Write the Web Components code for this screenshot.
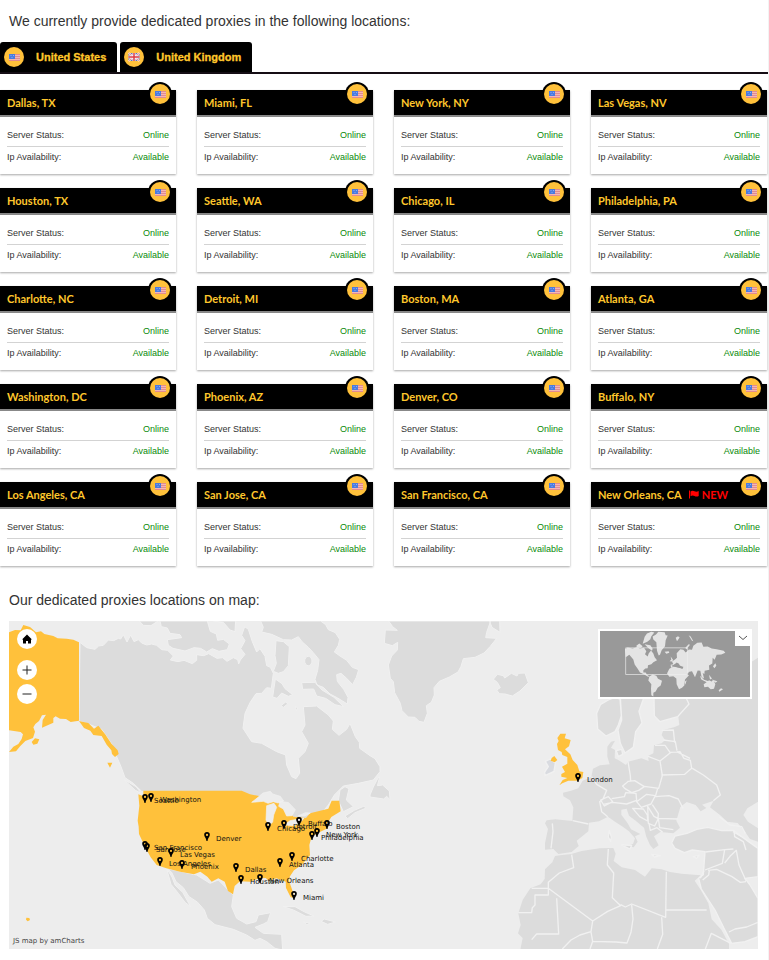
<!DOCTYPE html>
<html lang="en">
<head>
<meta charset="utf-8">
<title>Dedicated proxy locations</title>
<style>
body { margin: 0; background: #fff; color: #333; font-family: "Liberation Sans", Arial, sans-serif; }
</style>
</head>
<body>
<proxy-page></proxy-page>

<template id="flag-badge">
<style>
:host { display: block; width: 20px; height: 20px; border-radius: 50%; background: #ffc13b; }
svg { display: block; width: 20px; height: 20px; }
.gb, :host([country="gb"]) .us { display: none; }
:host([country="gb"]) .gb { display: block; }
</style>
<svg class="us" viewBox="0 0 20 20" aria-hidden="true">
<path d="M5 7h11v7h-11z" fill="#f3b8b4"/>
<path d="M5 7.500h11M5 9.500h11M5 11.500h11M5 13.500h11" stroke="#dd7f86" stroke-width=".8"/>
<path d="M5 7h6v5h-6z" fill="#4a7be0"/><path d="M6.500 8.500h1M9 8.500h1M7.500 10.500h1" stroke="#a9c4fa" stroke-width=".7"/>
</svg>
<svg class="gb" viewBox="0 0 20 20" aria-hidden="true">
<path d="M4.500 6h11v8h-11z" fill="#596bb3"/>
<path d="M4.500 6l11 8M15.500 6l-11 8" stroke="#fff" stroke-width="1.800"/>
<path d="M4.500 6l11 8M15.500 6l-11 8" stroke="#e0555c" stroke-width=".7"/>
<path d="M10 6v8M4.500 10h11" stroke="#fff" stroke-width="3"/>
<path d="M10 6v8M4.500 10h11" stroke="#dc3a42" stroke-width="1.500"/>
</svg>
</template>

<template id="country-tab">
<style>
:host { display: block; }
button { display: flex; align-items: center; gap: 12px; height: 30px; padding: 0 11px 0 4px; border: 0; border-radius: 3px 3px 0 0; background: #000; color: #ffc72c; font: bold 11px "Liberation Sans", Arial, sans-serif; -webkit-text-stroke: .3px; cursor: pointer; }
</style>
<button type="button" role="tab"><flag-badge></flag-badge><span><slot></slot></span></button>
</template>

<template id="location-card">
<style>
:host { display: block; position: relative; background: #fff; box-shadow: 0 1px 2px rgba(0,0,0,.35); }
header { display: flex; align-items: center; gap: 7px; height: 25px; padding: 0 7px; background: #000; border-bottom: 2px solid #888; }
h3 { margin: 0; color: #ffc72c; font: bold 11px/24px Lato, sans-serif; white-space: nowrap; }
.new { display: none; align-items: center; gap: 3px; color: #f00; font: bold 11px/24px Lato, sans-serif; }
:host([new]) .new { display: flex; }
.new svg { width: 10px; height: 9px; }
flag-badge { position: absolute; right: 6px; top: -6px; box-shadow: 0 0 0 2px #000; }
dl { margin: 0; padding: 8px 7px 6px; font-size: 9px; line-height: 21px; }
div { display: flex; justify-content: space-between; }
div + div { border-top: 1px solid #d3d3d3; }
dt, dd { margin: 0; }
dd { color: #0a8a0a; }
</style>
<header><h3><slot></slot></h3><span class="new"><svg viewBox="0 0 10 9" aria-hidden="true"><path d="M.5.500v8" stroke="red"/><path d="M1.500 1.500Q3.500.200 5.500 1.300T9.700 1V6Q7.500 7 5.500 6T1.500 6.200Z" fill="red"/></svg>NEW</span></header>
<flag-badge></flag-badge>
<dl><div><dt>Server Status:</dt><dd>Online</dd></div><div><dt>Ip Availability:</dt><dd>Available</dd></div></dl>
</template>

<template id="map-pin">
<style>
:host { position: absolute; display: block; left: calc((var(--x) - 9) / 749 * 100%); top: calc((var(--y) - 621) / 328 * 100%); }
svg { position: absolute; left: -3px; top: -4px; width: 6px; height: 9px; }
span { position: absolute; left: 9px; top: -1px; color: #111; font: 7px/9px "DejaVu Sans", Verdana, sans-serif; white-space: nowrap; }
</style>
<svg viewBox="0 0 6 9" aria-hidden="true"><path fill-rule="evenodd" d="M3 0A2.800 2.800 0 0 0 .200 2.900C.200 4.500 2.200 5.600 2.500 9H3.500C3.800 5.600 5.800 4.500 5.800 2.900A2.800 2.800 0 0 0 3 0ZM3 1.800A1.100 1.100 0 1 1 3 4A1.100 1.100 0 0 1 3 1.800Z"/></svg>
<span><slot></slot></span>
</template>

<template id="map-overview">
<style>
:host { display: block; position: absolute; right: 6px; top: 8px; border: 2px solid #fff; background: #999; }
svg { display: block; }
.world { width: 150px; height: 66px; }
button { position: absolute; right: -1px; top: -1px; display: grid; place-items: center; width: 16px; height: 16px; padding: 0; border: 0; background: #fff; }
</style>
<svg class="world" viewBox="30 32 450 197" role="img" aria-label="World overview">
<g fill="#e4e4e4">
<path d="M105 86L113 81 128 84 140 80 150 84 162 82 169 92 165 101 173 108 176 99 183 90 190 99 194 110 201 119 190 125 184 131 174 134 173 143 166 144 160 149 160 156 167 156 171 163 179 168 174 169 163 162 150 156 143 145 134 132 130 117 118 103 107 110Z"/>
<path d="M139 76L148 69 158 77 153 82 141 82ZM158 70L164 49 171 39 184 34 193 36 184 47 181 56 172 64ZM164 71L181 74 188 85 186 91 174 82Z"/>
<path d="M188 48L198 42 205 34 224 35 227 44 233 45 227 59 225 77 215 89 210 103 206 105 201 91 199 65 190 57ZM224 94L236 92 238 97 229 100Z"/>
<path d="M178 168L188 162 199 166 204 175 216 181 212 195 203 202 197 213 190 217 190 228 184 224 183 205 184 191 175 180Z"/>
<path d="M238 145L251 138 265 140 283 147 287 160 297 164 285 177 283 195 276 202 267 206 260 191 259 174 250 167 238 169 231 159Z"/>
<path d="M243 143L242 133 250 131 246 123 255 117 261 112 260 98 271 86 280 88 287 96 297 87 306 88 310 76 322 67 335 66 340 79 353 78 365 84 380 86 401 91 406 97 394 102 380 103 374 118 368 112 367 129 357 135 358 148 344 151 343 161 338 157 342 174 335 170 331 151 323 150 315 170 306 152 298 154 287 164 277 147 280 139 270 138 267 130 260 126 252 133Z"/>
<path d="M257 52l7-5 5 4-8 11zM296 44l6 4 8 14-4-1zM286 82l10-11 4 2-11 14zM242 108l7 10-2 5-8-1 5-5zM369 137l7-9 3 8-6 7zM330 166l12 12 16 5-8 2-16-8zM357 163l9 11-6 3zM365 177l17 5-5 5zM341 191L352 184 357 179 365 183 370 178 376 191 372 205 362 206 354 199 343 200ZM386 209l7-6 6 3-11 8zM284 184l6-5-4 14z"/>
</g>
<path d="M244 136l10-4 14 2 12 6-4 4-14-3z" fill="#999"/>
<path d="M107 82H293V162H107Z" fill="none" stroke="#eee" stroke-width="2"/>
</svg>
<button type="button" aria-label="Collapse overview"><svg width="10" height="6" viewBox="0 0 10 6"><path d="M1 1l4 3.500L9 1" fill="none" stroke="#555"/></svg></button>
</template>

<template id="proxy-map">
<style>
:host { display: block; position: relative; overflow: hidden; background: #ededed; }
.land { display: block; width: 100%; height: auto; }
.tools { position: absolute; left: 8px; top: 8px; display: grid; }
.tools button { display: grid; place-items: center; width: 20px; height: 20px; padding: 0; margin-bottom: 4px; border: 0; border-radius: 50%; background: #fff; }
.tools button:first-child { margin-bottom: 11px; }
a { position: absolute; left: 4px; bottom: 3px; color: #444; font: 7px/9px "DejaVu Sans", Verdana, sans-serif; text-decoration: none; }
</style>
<svg class="land" viewBox="27 3 2247 984" role="img" aria-label="Map of proxy locations">
<g fill="#dcdcdc" stroke="#f1f1f1" stroke-width="3" stroke-linejoin="round">
<path d="M240 67L260 83 285 88 296 78 310 76 325 60 341 62 355 55 362 57 370 44 381 66 392 45 402 65 415 59 425 69 440 75 455 72 470 76 485 89 503 91 520 108 511 120 534 125 552 121 577 131 590 121 590 104 611 107 626 101 651 115 668 113 681 124 700 113 713 119 716 132 721 120 735 103 722 86 735 62 725 46 734 20 745 28 757 65 770 96 780 86 795 109 800 137 811 142 820 160 814 205 800 203 785 220 768 221 750 248 735 280 729 325 755 365 785 370 830 395 857 405 860 435 875 470 888 476 899 460 895 415 915 395 925 370 905 335 915 315 910 260 950 258 985 285 1000 303 997 328 1017 346 1040 328 1050 310 1066 350 1078 367 1079 385 1110 407 1125 416 1140 440 1140 455 1120 480 1075 490 1030 498 1003 525 985 555 930 620 740 570 425 514 400 490 375 473 363 440 350 410 335 372 305 328 265 312 237 303Z"/>
<path d="M418 3L430 16 453 17 474 3ZM480 3L484 20 502 24 510 40 540 44 545 53 502 59 505 76 519 85 555 93 582 83 602 85 620 96 637 86 657 94 682 89 688 72 670 58 653 61 649 42 631 34 622 3ZM640 3L670 7 690 30 705 35 707 3Z"/>
<path d="M782 3L790 22 785 36 815 43 850 59 875 60 895 50 906 65 925 82 940 98 957 119 953 151 945 178 951 195 970 202 990 222 1013 234 1042 252 1044 232 1031 208 1012 184 1010 164 1023 160 1040 175 1058 194 1069 172 1076 149 1057 142 1040 121 1020 108 1003 96 1015 76 1019 58 1006 38 985 29 977 14 962 3ZM905 188L945 187 966 210 1002 232 1031 260 1005 254 977 235 950 228 941 207 908 208Z"/>
<path d="M828 62L850 65 868 80 865 137 850 155 835 160 820 154 829 130 825 107ZM826 177L846 191 855 206 878 224 865 229 845 219 831 235 818 231ZM843 257L858 245 863 252 850 262ZM885 260l8 3-3 9z"/><ellipse cx="925" cy="123" rx="11" ry="14"/>
<path d="M1166 3L1178 20 1192 31 1156 30 1153 70 1177 77 1193 67 1192 90 1175 108 1165 135 1171 175 1180 185 1184 218 1201 250 1206 272 1225 291 1245 292 1257 304 1272 307 1282 280 1279 257 1294 247 1303 225 1302 203 1318 184 1348 171 1374 156 1383 139 1390 116 1425 112 1452 99 1470 80 1490 55 1457 53 1460 37 1472 3ZM1468 3L1476 22 1500 37 1499 3Z"/>
<path d="M1480 178L1492 163 1510 167 1514 174 1534 160 1551 168 1555 160 1575 159 1585 188 1560 213 1537 228 1515 222 1498 221 1490 210 1501 203 1492 187Z"/>
<path d="M1110 525L1120 501 1134 474 1139 471 1132 497 1148 495 1168 513 1170 539 1160 529 1151 537 1110 531ZM1020 510L1035 500 1047 506 1039 540 1060 560 1030 575 1015 542ZM1035 588L1063 571 1093 558 1097 565 1065 578 1043 596Z"/>
<path d="M500 745L545 755 590 765 630 790 655 780 700 825 695 860 710 895 740 912 768 905 775 885 812 878 803 905 790 912 765 922 790 940 845 943 848 990 825 985 800 965 780 955 765 961 740 945 700 928 645 914 622 895 613 870 592 846 567 830 550 803 528 785 515 757Z"/>
<path d="M500 746L516 771 525 795 548 817 572 860 555 847 535 820 513 793ZM373 480l15 8 20 12 16 20-18-9z"/>
<path d="M850 860L885 860 914 876 942 888 918 889 880 870ZM963 904L973 897 1007 906 983 913ZM910 906l20 3-9 5z"/>
</g>
<g fill="#ffc13b">
<path d="M27 37L45 30 62 31 70 15 90 21 108 37 123 34 133 42 160 48 173 55 200 56 220 59 237 67V302L212 306 198 297 180 296 167 289 160 294 160 308 126 323 128 300 138 284 126 286 117 303 106 312 100 322 105 335 99 354 76 363 61 378 48 394 27 396 40 380 55 372 65 357 69 343 62 336 27 331Z"/>
<path d="M237 303L265 309 282 326 295 317 315 342 335 372 353 391 356 402 345 411 336 402 334 391 320 374 305 348 280 345 271 332 252 324ZM95 366L105 355 118 358 112 371 100 374ZM322 428L337 428 330 443ZM79 893l9 1 2 6-7 4-5-5z"/>
<path d="M415 523L430 529 430 512 725 512 750 523 777 528 806 531 850 555 880 590 918 594 930 580 985 566 995 542 1018 542 1022 574 994 591 981 611 983 625 952 640 935 650 928 675 930 706 905 735 882 751 869 770 867 782 880 820 882 833 872 832 858 804 857 785 829 775 806 782 797 774 778 775 750 785 720 784 704 798 699 823 684 813 674 785 655 775 635 785 622 770 601 755 582 763 540 755 499 745 470 735 452 712 435 680 417 642 416 620 413 602 418 557Z"/>
</g>
<g fill="#ededed" stroke="#f1f1f1" stroke-width="2">
<path d="M755 547L774 532 789 519 811 514 818 522 841 529 851 543 834 549 820 545 804 550 790 544ZM800 557L822 550 830 562 821 585 818 606 807 617 798 600ZM840 544L866 548 886 569 876 587 860 588 850 567 836 559ZM853 615L870 602 912 594 904 604 883 617ZM895 587L917 578 931 579 915 588Z"/>
</g>
<g transform="translate(1500 -15)" fill="#dcdcdc" stroke="#f1f1f1" stroke-width="4" stroke-linejoin="round">
<path stroke="none" d="M550 248L567 265 535 305 538 330 522 337 490 345 485 360 495 375 485 385 462 391 460 415 444 423 446 438 424 430 384 440 378 450 355 435 344 430 345 405 333 398 345 377 333 380 322 395 322 425 329 448 300 451 279 461 274 486 248 497 235 520 213 527 189 533 190 544 210 556 220 577 217 618 166 613 140 616 135 625 144 642 135 685 135 704 160 702 175 717 215 711 236 693 230 677 265 649 267 623 297 619 324 605 345 620 365 633 387 649 405 670 399 687 381 693 401 697 413 680 405 664 421 657 393 643 382 623 364 599 364 584 380 581 387 602 407 617 432 638 439 665 450 690 460 702 476 691 462 664 481 651 520 655 540 638 529 617 541 576 560 561 587 570 602 589 619 579 606 569 641 557 630 577 660 600 682 620 713 624 738 655 750 672 774 680 774 640 744 620 730 600 742 580 774 560V128L755 140V248Z"/>
<path d="M515 684L525 663 561 655 590 643 623 637 665 647 700 646 725 665 774 700V785L735 790 750 810 774 850V965L735 980 695 985 672 940 645 885 604 822 596 790 610 779 615 710 577 705 553 713 525 700Z"/>
<path stroke="none" d="M165 723L180 721 214 717 245 708 299 700 340 699 347 716 341 738 365 757 405 765 435 785 455 760 485 763 510 771 545 776 583 779 602 781 584 797 602 824 625 865 635 913 664 944 687 987V1004H61L68 969 54 955 62 930 55 895 68 855 91 820 122 808 134 792 135 763 157 742Z"/>
<path d="M290 295L302 268 325 255 345 247 360 252 364 302 355 330 345 350 318 363 293 342ZM361 247H432L417 289 426 324 407 350 400 397 375 414 361 385 354 345 365 315ZM462 248H558L567 267 533 305 480 320 463 303Z"/>
<path d="M349 407l16-4 3 15-13 7zM328 647l6 19-2 13-7-13zM365 690l30 1-5 11zM455 718l26 4-18 4zM580 725l17-4-7 9z"/>
<path fill="#d9dbe0" d="M151 432L166 444 162 469 135 482 134 471 145 455 136 439Z"/>
<g fill="none" stroke-width="4">
<path d="M157 625L159 650 153 700M218 617L265 627M275 485L290 508 320 526 309 552 299 560 305 590 323 605M384 440L391 482 392 500M368 513L385 499 404 497 433 515 416 526 395 533 374 520ZM335 551L373 545 377 533 408 535 410 556 380 567 338 562 310 568M302 555L325 545 338 560 313 573ZM410 560L440 538 466 542 453 567 424 577ZM480 438L487 482 476 520 433 514M444 424L480 438 513 412 540 410 552 430 571 436 575 460 554 478 484 480M465 391H495L510 412M490 375L526 380 531 407M485 346L520 345 524 383M577 460L610 480 650 510 661 540 640 557M473 520L466 545 507 542 535 552 549 580M457 569L475 596 474 610 533 612M398 580L430 582 442 600 443 618 419 605ZM443 574L462 604 475 611 464 633 445 625ZM447 625L451 646 471 638 488 652M530 410L570 430M475 610L479 638 520 644"/>
<path d="M215 719L221 758 178 774 145 802V820M95 820H145V840H105V870L97 878 95 893H55M145 820L278 918 323 889 362 872 337 848 341 774 322 750 325 702M170 850L176 957H110L95 974M278 918L273 950 240 960 213 975 187 1002M362 869L376 876 395 867 497 907 499 770M499 885H620M395 870L399 912 393 952 381 984 348 981 278 979 270 1002M485 907L488 958 472 1002M693 985L665 971 634 955 616 1002M273 951L278 979"/>
<path d="M616 711L675 704 700 702M615 765L667 745 674 704M624 766L650 763 696 785 721 802 738 800M674 744L690 724 709 706 717 750 738 797M774 922L740 936 705 942 687 951M702 646L704 665 730 680 738 705M659 606L690 630 725 635 736 655M699 650L725 665M601 790L612 767M608 795L626 780 628 766"/>
</g>
<g fill="#ffc13b" stroke="none">
<path d="M181 356L198 356 194 370 212 375 207 394 195 403 211 418 218 435 232 450 238 469 250 471 247 489 232 497 205 497 187 505 178 511 188 495 202 489 184 485 184 477 195 471 186 455 202 446 202 426 187 420 185 411 174 405 171 387 176 378 172 369Z"/>
<path d="M155 429l8-6 9 12-8 7-12-5z"/></g>
</g>
</svg>
<slot></slot>
<map-overview></map-overview>
<div class="tools">
<button type="button" aria-label="Home"><svg width="10" height="10" viewBox="0 0 10 10"><path d="M5 .500L0 5.500H1V9.500H4V7H6V9.500H9V5.500H10Z"/></svg></button>
<button type="button" aria-label="Zoom in"><svg width="10" height="10" viewBox="0 0 10 10"><path d="M5 .500V9.500M.500 5H9.500" stroke="#222"/></svg></button>
<button type="button" aria-label="Zoom out"><svg width="10" height="10" viewBox="0 0 10 10"><path d="M.500 5H9.500" stroke="#222"/></svg></button>
</div>
<a href="#map">JS map by amCharts</a>
</template>

<template id="proxy-page">
<style>
:host { display: block; min-height: 100vh; box-sizing: border-box; border-right: 1px solid #f3f3f3; }
h2 { margin: 0; padding: 0 9px; color: #333; font-size: 14px; font-weight: 300; line-height: 42px; }
nav { display: flex; gap: 3px; border-bottom: 2px solid #150d14; }
.grid { display: grid; grid-template-columns: repeat(4, 1fr); gap: 14px 21px; margin: 16px 1px 13px 0; }
proxy-map { margin: 0 10px 11px 9px; }
</style>
<main>
<h2>We currently provide dedicated proxies in the following locations:</h2>
<nav role="tablist"><country-tab>United States</country-tab><country-tab country="gb">United Kingdom</country-tab></nav>
<div class="grid"></div>
<h2>Our dedicated proxies locations on map:</h2>
<proxy-map id="map"></proxy-map>
</main>
</template>

<script>
class TemplateElement extends HTMLElement {
  constructor() {
    super();
    this.attachShadow({ mode: "open" });
  }
  connectedCallback() {
    if (this.shadowRoot.childNodes.length) return;
    this.shadowRoot.append(document.getElementById(this.localName).content.cloneNode(true));
    this.ready();
  }
  ready() {}
}
class FlagBadge extends TemplateElement {}
class CountryTab extends TemplateElement {
  ready() {
    this.shadowRoot.querySelector("flag-badge").setAttribute("country", this.getAttribute("country") || "us");
  }
}
class LocationCard extends TemplateElement {}
class MapPin extends TemplateElement {
  ready() {
    this.style.setProperty("--x", this.getAttribute("x"));
    this.style.setProperty("--y", this.getAttribute("y"));
  }
}
class MapOverview extends TemplateElement {}
class ProxyMap extends TemplateElement {}
class ProxyPage extends TemplateElement {
  ready() {
    const cities = ["Dallas, TX", "Miami, FL", "New York, NY", "Las Vegas, NV", "Houston, TX", "Seattle, WA", "Chicago, IL", "Philadelphia, PA", "Charlotte, NC", "Detroit, MI", "Boston, MA", "Atlanta, GA", "Washington, DC", "Phoenix, AZ", "Denver, CO", "Buffalo, NY", "Los Angeles, CA", "San Jose, CA", "San Francisco, CA", "New Orleans, CA"];
    const grid = this.shadowRoot.querySelector(".grid");
    for (const city of cities) {
      const card = document.createElement("location-card");
      card.textContent = city;
      if (city.startsWith("New Orleans")) card.setAttribute("new", "");
      grid.append(card);
    }
    const pins = [["Seattle", 145, 798], ["Washington", 151, 797], ["Denver", 207, 836], ["San Francisco", 145, 845], ["San Jose", 147, 847], ["Las Vegas", 171, 852], ["Los Angeles", 160, 861], ["Phoenix", 182, 864], ["Dallas", 236, 867], ["Houston", 241, 879], ["New Orleans", 260, 878], ["Chicago", 268, 826], ["Detroit", 284, 824], ["Buffalo", 299, 821], ["Boston", 327, 824], ["New York", 317, 832], ["Philadelphia", 312, 835], ["Charlotte", 292, 856], ["Atlanta", 280, 862], ["Miami", 294, 895], ["London", 578, 777]];
    const map = this.shadowRoot.querySelector("proxy-map");
    for (const [name, x, y] of pins) {
      const pin = document.createElement("map-pin");
      pin.textContent = name;
      pin.setAttribute("x", x);
      pin.setAttribute("y", y);
      map.append(pin);
    }
  }
}
customElements.define("flag-badge", FlagBadge);
customElements.define("country-tab", CountryTab);
customElements.define("location-card", LocationCard);
customElements.define("map-pin", MapPin);
customElements.define("map-overview", MapOverview);
customElements.define("proxy-map", ProxyMap);
customElements.define("proxy-page", ProxyPage);
</script>
</body>
</html>
